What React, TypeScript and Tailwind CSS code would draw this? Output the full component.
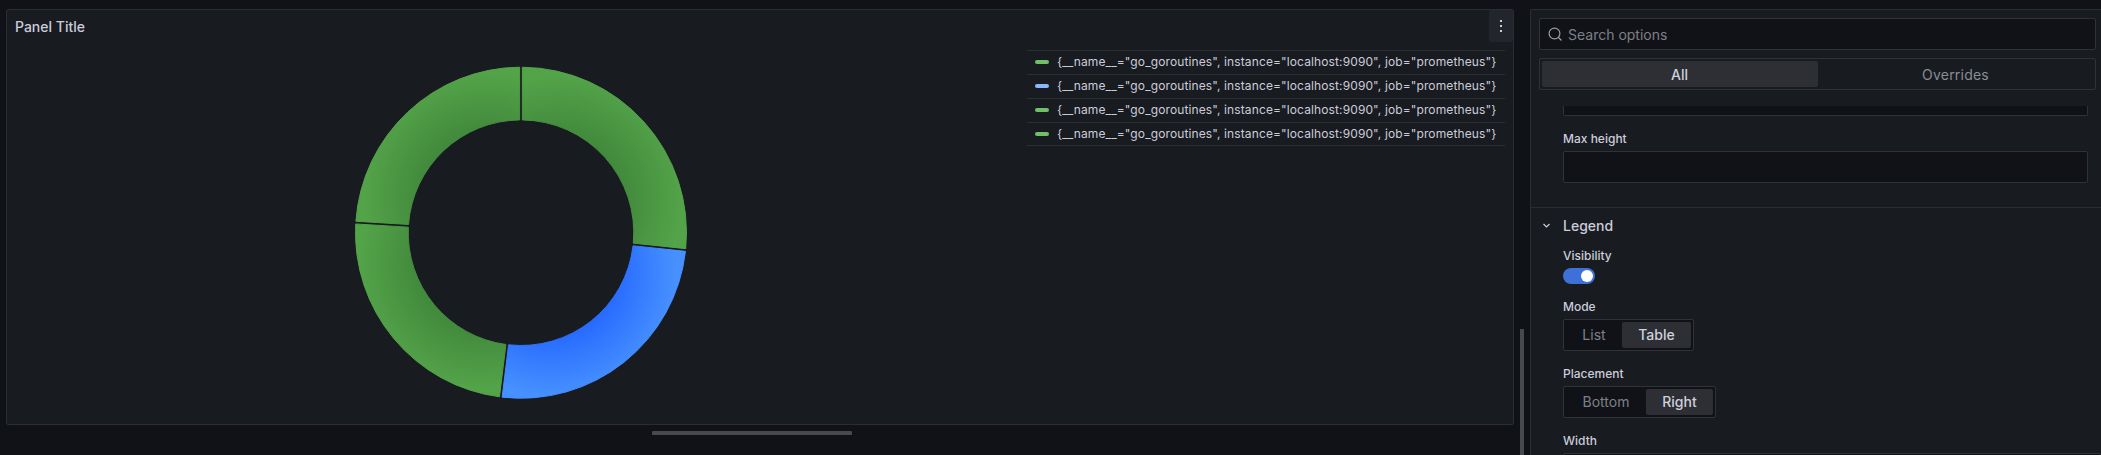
const CX = 521;
const CY = 232.7;
const R = 165.5;
const RI = 112.8;

function polar(rad: number, deg: number) {
  const t = (deg * Math.PI) / 180;
  return { x: CX + rad * Math.sin(t), y: CY - rad * Math.cos(t) };
}

function slicePath(a0: number, a1: number) {
  // angles clockwise from top, in degrees; a constant-width gap and small rounding come from inset + round stroke
  const inset = 1.35;
  const pt = (rad: number, deg: number) => {
    const p = polar(rad, deg);
    return `${p.x.toFixed(2)} ${p.y.toFixed(2)}`;
  };
  const dOuter = (inset / R) * (180 / Math.PI);
  const dInner = (inset / RI) * (180 / Math.PI);
  return `M${pt(R, a0 + dOuter)} A${R} ${R} 0 0 1 ${pt(R, a1 - dOuter)} L${pt(RI, a1 - dInner)} A${RI} ${RI} 0 0 0 ${pt(RI, a0 + dInner)} Z`;
}

const GREEN = ["#40873b", "#53a349"];
const BLUE = ["#2468ff", "#4690ff"];

const slices = [
  { a0: 0, a1: 96, c: GREEN },
  { a0: 96, a1: 187, c: BLUE },
  { a0: 187, a1: 273.5, c: GREEN },
  { a0: 273.5, a1: 360, c: GREEN },
];

const legendColors = ["bg-[#73bf69]", "bg-[#8ab8ff]", "bg-[#73bf69]", "bg-[#73bf69]"];
const seriesLabel = '{__name__="go_goroutines", instance="localhost:9090", job="prometheus"}';

function Donut() {
  return (
    <svg className="absolute left-0 top-0" width={1060} height={425} viewBox="0 0 1060 425">
      <defs>
        {slices.map((s, i) => {
          const c = polar(50, (s.a0 + s.a1) / 2);
          return (
            <radialGradient key={i} id={`g${i}`} gradientUnits="userSpaceOnUse" cx={c.x} cy={c.y} r={140}>
              <stop offset="0.42" stopColor={s.c[0]} />
              <stop offset="0.88" stopColor={s.c[1]} />
              <stop offset="1" stopColor={s.c[1]} />
            </radialGradient>
          );
        })}
      </defs>
      {slices.map((s, i) => (
        <path
          key={s.a0}
          d={slicePath(s.a0, s.a1)}
          fill={`url(#g${i})`}
          stroke={`url(#g${i})`}
          strokeWidth={1}
          strokeLinejoin="round"
        />
      ))}
    </svg>
  );
}

function Label({ children }: { children: React.ReactNode }) {
  return <div className="h-[22px] pb-[1px] text-[12px] font-medium leading-[20px] text-[#ccccdc]">{children}</div>;
}

function Radio({ items, active, widths }: { items: string[]; active: string; widths: string[] }) {
  return (
    <div className="flex h-8 w-fit gap-0 rounded-[2px] border border-[#2f3237] bg-[#111217] p-[2px]">
      {items.map((it, i) => (
        <div
          key={it}
          className={`${widths[i]} flex items-center justify-center rounded-[2px] pb-[1px] text-[14px] ${
            it === active ? "bg-[#2d2f35] font-medium text-[#d0d0dc]" : "text-[#7e8088]"
          }`}
        >
          {it}
        </div>
      ))}
    </div>
  );
}

export default function App() {
  return (
    <div className="relative flex h-[455px] w-[2101px] overflow-hidden bg-[#111217] pl-[6px] pt-[9px] font-['Inter',sans-serif]">
      <div className="relative h-[416px] w-[1508px] shrink-0 rounded-[2px] border border-[#2a2d32] bg-[#181b1f]">
        <div className="px-[8px] pt-[6px] text-[14px] font-medium leading-[22px] text-[#ccccdc]">Panel Title</div>
        <div className="absolute right-0 top-0 flex h-[32px] w-[24px] items-center justify-center rounded-[2px] bg-[#22252b]">
          <svg width="4" height="14" viewBox="0 0 4 14">
            <rect x="1" y="1" width="2" height="2" fill="#ccccdc" />
            <rect x="1" y="6" width="2" height="2" fill="#ccccdc" />
            <rect x="1" y="11" width="2" height="2" fill="#ccccdc" />
          </svg>
        </div>
        <div className="absolute left-[1020px] top-[40px] w-[478px] border-t border-[#2a2d32]">
          {legendColors.map((c, i) => (
            <div
              key={i}
              className="flex h-[24px] items-center border-b border-[#2a2d32] pb-[1px] pl-[8px] text-[12px] tracking-[0.115px] text-[#ccccdc] last:h-[23px]"
            >
              <span className={`${c} mr-[8px] h-[4px] w-[14px] rounded-[2px]`} />
              <span className="whitespace-nowrap">{seriesLabel}</span>
            </div>
          ))}
        </div>
      </div>

      <div className="absolute left-[652px] top-[431px] h-[4px] w-[200px] rounded-[1px] bg-[#47494f]" />
      <div className="absolute left-[1520px] top-[329px] h-[126px] w-[4px] bg-[#47494f]" />

      <div className="ml-[16px] w-[571px] shrink-0 rounded-tl-[2px] border-l border-t border-[#2a2d32] bg-[#181b1f] pl-[8px] pr-[5px] pt-[8px]">
        <div className="flex h-[32px] items-center rounded-[2px] border border-[#2f3237] bg-[#111217] pl-[8px] text-[14px] text-[#7e8088]">
          <svg className="mr-[6px] shrink-0" width="14" height="16" viewBox="0 0 14 16" fill="none" stroke="#9a9ca3" strokeWidth="1.2">
            <circle cx="6.5" cy="7.5" r="5.4" />
            <path d="M10.5 11.5 13.5 14.5" />
          </svg>
          Search options
        </div>
        <div className="mt-[8px] flex h-[32px] rounded-[2px] border border-[#2f3237] p-[2px]">
          <div className="flex w-[276px] items-center justify-center rounded-[2px] bg-[#2d2f35] pr-[1px] text-[14px] font-medium text-[#d0d0dc]">All</div>
          <div className="flex flex-1 items-center justify-center text-[14px] tracking-[0.2px] text-[#8b8d94]">Overrides</div>
        </div>
        <div className="mt-[16px] overflow-hidden">
          <div className="ml-[24px] mr-[8px] h-[10px] rounded-b-[2px] border border-t-0 border-[#2f3237] bg-[#111217]" />
          <div className="ml-[24px] mr-[8px] mt-[13px]">
            <Label>Max height</Label>
            <div className="h-[32px] rounded-[2px] border border-[#2f3237] bg-[#111217]" />
          </div>
        </div>
        <div className="-ml-[8px] -mr-[5px] mt-[24px] border-t border-[#2a2d32] pl-[9px]">
          <div className="flex h-[35px] items-center pb-[1px]">
            <svg className="mr-[10px]" width="13" height="13" viewBox="0 0 13 13" fill="none" stroke="#ccccdc" strokeWidth="1.2">
              <path d="M3.5 5 6.5 8 9.5 5" />
            </svg>
            <span className="text-[14px] font-medium text-[#ccccdc]">Legend</span>
          </div>
          <div className="ml-[23px] mt-[3px]">
            <Label>Visibility</Label>
            <div className="relative h-[16px] w-[32px] rounded-full bg-[#3d71d9]">
              <div className="absolute right-[2px] top-[2px] h-[12px] w-[12px] rounded-full bg-white" />
            </div>
            <div className="mt-[13px]">
              <Label>Mode</Label>
              <Radio items={["List", "Table"]} active="Table" widths={["w-[56px]", "w-[69px]"]} />
            </div>
            <div className="mt-[13px]">
              <Label>Placement</Label>
              <Radio items={["Bottom", "Right"]} active="Right" widths={["w-[80px]", "w-[67px]"]} />
            </div>
            <div className="mt-[13px]">
              <Label>Width</Label>
              <div className="h-[32px] rounded-[2px] border border-[#2f3237] bg-[#111217]" />
            </div>
          </div>
        </div>
      </div>

      <Donut />
    </div>
  );
}
